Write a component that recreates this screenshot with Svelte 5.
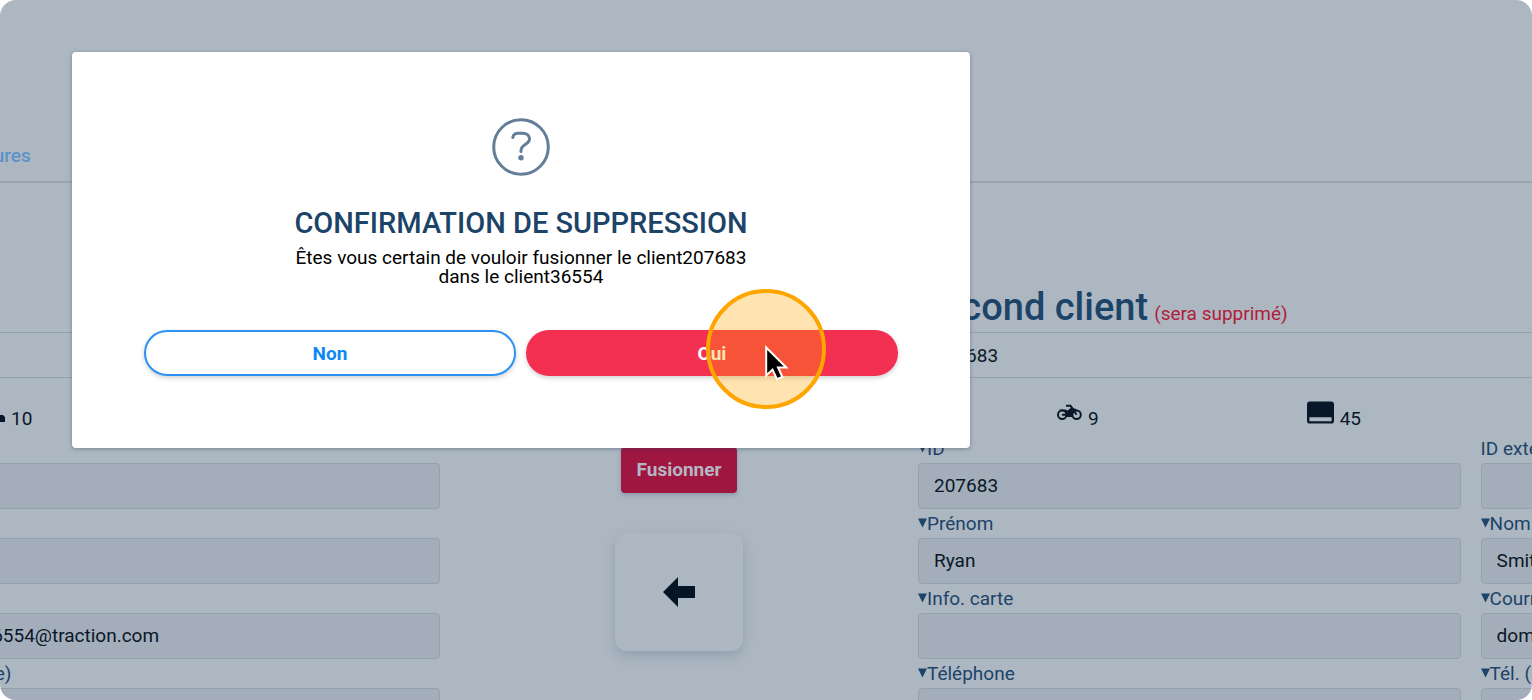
<script lang="ts">
	type Field = {
		id: string;
		label: string;
		value: string;
		caret?: boolean;
	};

	const firstClient: Field[] = [
		{ id: 'a-ext', label: '', value: '' },
		{ id: 'a-name', label: '', value: '' },
		{ id: 'a-mail', label: '', value: 'courriel.36554@traction.com' },
		{ id: 'a-mobile', label: 'Tél. (mobile)', value: '', caret: true }
	];

	const secondClient: Field[] = [
		{ id: 'b-id', label: 'ID', value: '207683', caret: true },
		{ id: 'b-ext', label: 'ID externe', value: '' },
		{ id: 'b-first', label: 'Prénom', value: 'Ryan', caret: true },
		{ id: 'b-last', label: 'Nom', value: 'Smith', caret: true },
		{ id: 'b-card', label: 'Info. carte', value: '', caret: true },
		{ id: 'b-mail', label: 'Courriel', value: 'domenic@traction.com', caret: true },
		{ id: 'b-phone', label: 'Téléphone', value: '', caret: true },
		{ id: 'b-mobile', label: 'Tél. (mobile)', value: '', caret: true }
	];
</script>

{#snippet field(f: Field)}
	<div class="field">
		<label for={f.id}>
			{#if f.caret}
				<svg class="caret" viewBox="0 0 10 10" aria-hidden="true"><path d="M0 0h10L5 10z" /></svg>
			{/if}{f.label}
		</label>
		<input id={f.id} type="text" value={f.value} aria-label={f.label || 'Champ client'} readonly />
	</div>
{/snippet}

<div class="page">
	<nav class="tabs">
		<a href="#factures">Factures</a>
	</nav>

	<main class="merge">
		<section class="client client--first">
			<header class="client__head"></header>
			<div class="client__number"></div>
			<div class="stats stats--first">
				<span class="stat">
					<svg class="stat__dot" viewBox="0 0 5 12" aria-hidden="true">
						<path d="M0 2h3l2 2v5H0z" />
					</svg>
					10
				</span>
			</div>
			<div class="fields fields--first">
				{#each firstClient as f}
					{@render field(f)}
				{/each}
			</div>
		</section>

		<section class="actions">
			<header class="client__head"></header>
			<div class="client__number"></div>
			<div class="actions__body">
				<button type="button" class="fuse">Fusionner</button>
				<button type="button" class="swap" aria-label="Inverser">
					<svg viewBox="0 0 32 32" aria-hidden="true">
						<path d="M0 16 15 1v9h17v12H15v9z" />
					</svg>
				</button>
			</div>
		</section>

		<section class="client">
			<header class="client__head">
				<h2>Second client</h2>
				<span class="warn">(sera supprimé)</span>
			</header>
			<div class="client__number">207683</div>
			<div class="stats">
				<span class="stat">
					<svg class="stat__moto" viewBox="0 0 25 17" aria-hidden="true">
						<circle class="line" cx="5.200" cy="10.800" r="4.200" />
						<circle class="line" cx="19.600" cy="10.800" r="4.200" />
						<path class="line" d="M9 1.800h4.500L19.600 10.800" />
						<path d="M1.500 5.500h7l2 1 4.500-3.500 1.500 1.200 3.500 1-3.500 3-1.500 4.800H9.500L8.500 11.800H5V9.800h3.500L7.500 7.200z" />
					</svg>
					9
				</span>
				<span class="stat">
					<svg class="stat__card" viewBox="0 0 28 23" aria-hidden="true">
						<path fill-rule="evenodd" d="M3 0h22q3 0 3 3v17q0 3-3 3H3q-3 0-3-3V3q0-3 3-3zM2.500 16.500v4h23v-4z" />
					</svg>
					45
				</span>
			</div>
			<div class="fields">
				{#each secondClient as f}
					{@render field(f)}
				{/each}
			</div>
		</section>
	</main>

	<div class="modal" role="dialog" aria-modal="true" aria-labelledby="modal-title">
		<svg class="modal__icon" viewBox="0 0 58 58" aria-hidden="true">
			<circle cx="29" cy="29" r="27.300" />
			<path d="M20.800 19.500C21.300 16.500 23.500 15.200 26 15.200h4.500c4.500 0 7 2.500 7 5.800 0 6-8.500 4.500-8.500 11.800v0.700" />
			<circle class="modal__icon-dot" cx="29" cy="39.800" r="2.700" />
		</svg>
		<h1 id="modal-title">CONFIRMATION DE SUPPRESSION</h1>
		<p>Êtes vous certain de vouloir fusionner le client207683<br />dans le client36554</p>
		<div class="modal__buttons">
			<button type="button" class="pill">Non</button>
			<div class="confirm">
				<button type="button" class="pill pill--danger">Oui</button>
				<div class="spot" aria-hidden="true">
					<svg class="cursor" viewBox="0 0 24 36">
						<path d="M1.200 2.500V30.500L7.500 24.600 12 34.200 17.300 31.800 13 22.500H21.300z" />
					</svg>
				</div>
			</div>
		</div>
	</div>
</div>

<style>
	:global(body) {
		background: #fff;
	}

	.page {
		--line: #95a1ae;
		--navy: #1c4368;
		--ink: #091828;
		position: relative;
		height: 100vh;
		overflow: hidden;
		border-radius: 16px;
		background: #adb7c2;
		color: var(--ink);
		font-family: Roboto, sans-serif;
		font-size: 19px;
	}

	.page *,
	.page *::before {
		box-sizing: border-box;
	}

	button,
	input {
		font: inherit;
	}

	button {
		cursor: pointer;
	}

	.tabs {
		display: flex;
		align-items: flex-end;
		height: 183px;
		padding-bottom: 14px;
		border-bottom: 2px solid #9aa5b1;
	}

	.tabs a {
		margin-left: -43px;
		color: #5c92c6;
		font-weight: 500;
		line-height: 22px;
		text-decoration: none;
	}

	.merge {
		display: grid;
		grid-template-columns: 440fr 478fr 614fr;
	}

	.client,
	.actions {
		min-width: 0;
	}

	.client__head {
		display: flex;
		align-items: baseline;
		gap: 6px;
		height: 150px;
		padding-top: 102px;
		border-bottom: 1px solid var(--line);
	}

	h2 {
		margin: 0;
		color: var(--navy);
		font-size: 38px;
		font-weight: 500;
		line-height: 44px;
		white-space: nowrap;
	}

	.warn {
		color: #b01c3a;
	}

	.client__number {
		height: 45px;
		padding-left: 16px;
		border-bottom: 1px solid var(--line);
		line-height: 45px;
	}

	.stats {
		display: flex;
		gap: 208px;
		height: 56px;
		padding: 20px 0 0 139px;
	}

	.stats--first {
		padding-left: 0;
	}

	.stat {
		display: flex;
		gap: 6px;
		height: 44px;
		line-height: 42px;
	}

	.stat svg {
		fill: var(--ink);
	}

	.stat__moto {
		width: 25px;
		height: 17px;
		margin-top: 6px;
	}

	.stat__moto .line {
		fill: none;
		stroke: var(--ink);
		stroke-width: 2;
	}

	.stat__card {
		width: 27px;
		height: 23px;
		margin-top: 3px;
	}

	.stat__dot {
		width: 5px;
		height: 12px;
		margin-top: 15px;
	}

	.fields {
		display: grid;
		grid-template-columns: 1fr 1fr;
		column-gap: 20px;
		width: 180%;
	}

	.fields--first {
		grid-template-columns: 1fr;
		width: auto;
		margin-left: -103px;
	}

	.field label {
		display: flex;
		align-items: center;
		height: 29px;
		padding-bottom: 1px;
		color: var(--navy);
		white-space: nowrap;
	}

	.caret {
		width: 9px;
		height: 10px;
		fill: var(--navy);
	}

	.field input {
		display: block;
		width: 100%;
		height: 46px;
		padding: 0 15px 1px;
		border: 1px solid var(--line);
		border-radius: 4px;
		background: #a4adba;
		color: var(--ink);
	}

	.actions__body {
		display: flex;
		flex-direction: column;
		align-items: center;
		gap: 40px;
		padding-top: 69px;
	}

	.fuse {
		height: 46px;
		padding: 0 16px 1px;
		border: 0;
		border-radius: 4px;
		background: #9f1640;
		box-shadow: 0 2px 4px rgb(60 80 105 / 0.3);
		color: #b6b6c3;
		font-weight: 700;
	}

	.swap {
		display: flex;
		align-items: center;
		justify-content: center;
		width: 128px;
		height: 118px;
		border: 0;
		border-radius: 12px;
		background: #adb7c2;
		box-shadow: 0 5px 12px rgb(80 100 125 / 0.28);
	}

	.swap svg {
		width: 32px;
		height: 32px;
		fill: #051525;
	}

	.modal {
		position: absolute;
		top: 52px;
		left: 72px;
		display: flex;
		flex-direction: column;
		align-items: center;
		width: 898px;
		max-width: calc(100% - 144px);
		padding: 66px 72px 72px;
		border-radius: 4px;
		background: #fff;
		box-shadow: 0 1px 4px rgb(40 60 85 / 0.4);
	}

	.modal__icon {
		width: 58px;
		height: 58px;
		fill: none;
		stroke: #637e99;
		stroke-width: 3;
		stroke-linecap: round;
	}

	.modal__icon .modal__icon-dot {
		fill: #637e99;
		stroke: none;
	}

	h1 {
		margin: 30px 0 8px;
		color: var(--navy);
		font-size: 29px;
		font-weight: 500;
		line-height: 34px;
	}

	p {
		margin: 0 0 44px;
		color: #000;
		line-height: 19px;
		text-align: center;
	}

	.modal__buttons {
		display: grid;
		grid-template-columns: 1fr 1fr;
		gap: 10px;
		width: 100%;
	}

	.pill {
		width: 100%;
		height: 46px;
		border: 2px solid #2b91f3;
		border-radius: 23px;
		background: #fff;
		box-shadow: 0 2px 5px rgb(0 0 0 / 0.18);
		color: #0d87f5;
		font-weight: 700;
	}

	.pill--danger {
		border-color: #f33052;
		background: #f33052;
		color: #fff;
	}

	.confirm {
		position: relative;
	}

	/* Click highlight, laid over the confirm button */
	.spot {
		position: absolute;
		top: -41px;
		left: 180px;
		width: 120px;
		height: 120px;
		border: 4px solid #ffa500;
		border-radius: 50%;
		background: rgb(255 165 0 / 0.3);
		pointer-events: none;
	}

	.cursor {
		position: absolute;
		top: 52px;
		left: 55px;
		width: 24px;
		height: 36px;
		fill: #000;
		stroke: #fff;
		stroke-width: 2;
	}
</style>
